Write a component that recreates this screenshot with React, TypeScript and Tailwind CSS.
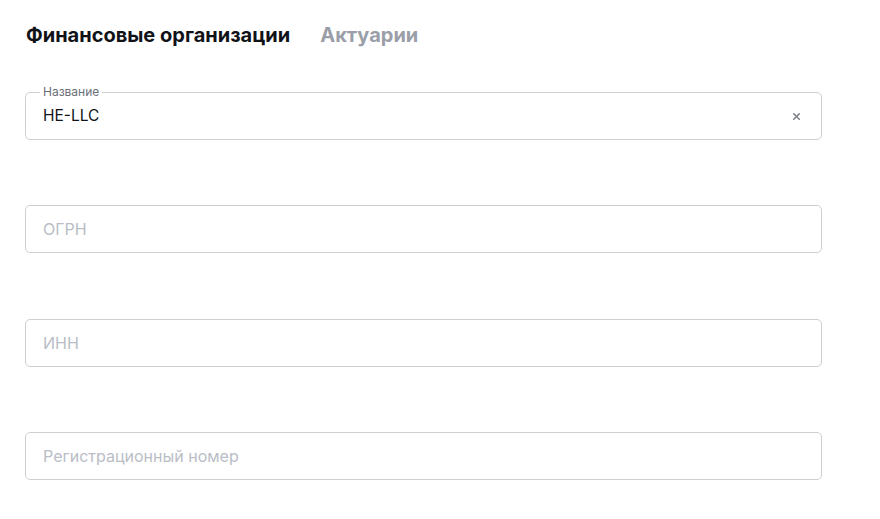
import { X } from "lucide-react";

const FIELDS = ["ОГРН", "ИНН", "Регистрационный номер"];

export default function App() {
  return (
    <div className="min-h-screen bg-white font-['Inter',sans-serif]">
      <div className="w-[822px] pl-[25px] pt-[22px]">
        <div className="flex items-center gap-[30px] px-px">
          <span className="text-[20px] font-bold leading-[26px] text-[#111318]">
            Финансовые организации
          </span>
          <span className="text-[20px] font-bold leading-[26px] text-[#9a9ea8]">Актуарии</span>
        </div>

        <div className="mt-[44px] flex flex-col gap-[65.4px]">
          <div className="relative flex h-[48px] items-center justify-between rounded-[5px] border border-[#cdcfd3] pl-[17px] pr-[19px]">
            <span className="absolute -top-[8px] left-[14px] bg-white px-[3px] text-[12px] leading-[14px] text-[#6b6f78]">
              Название
            </span>
            <span className="text-[15.5px] text-[#111318]">HE-LLC</span>
            <X className="h-[11px] w-[11px] text-[#7d828c]" strokeWidth={3.5} />
          </div>

          {FIELDS.map((f) => (
            <div
              key={f}
              className="flex h-[48px] items-center rounded-[5px] border border-[#cdcfd3] px-[17px]"
            >
              <span className="text-[16px] text-[#b9bdc6]">{f}</span>
            </div>
          ))}
        </div>
      </div>
    </div>
  );
}
